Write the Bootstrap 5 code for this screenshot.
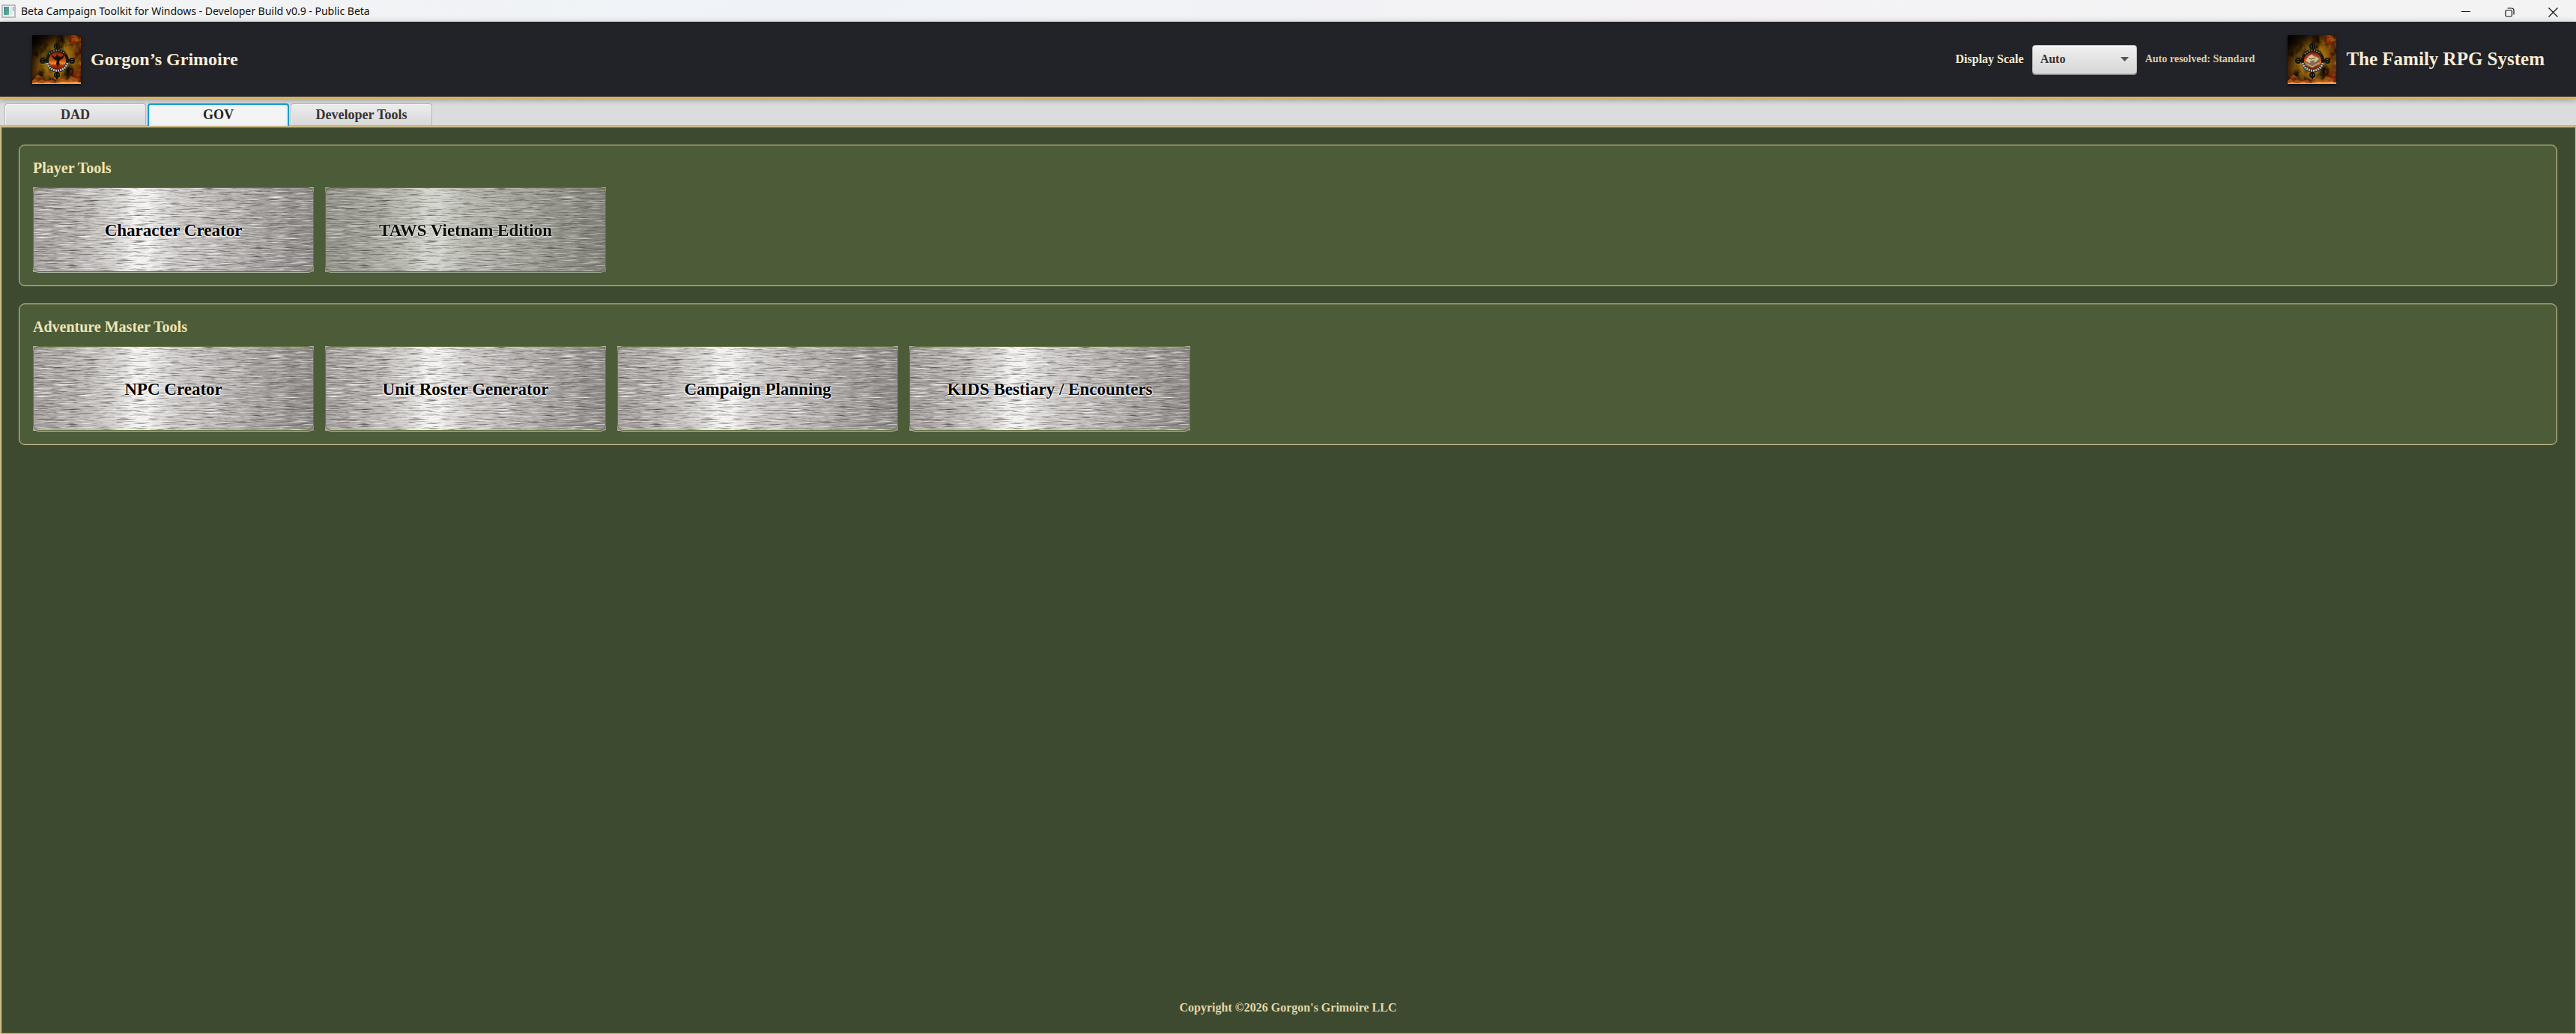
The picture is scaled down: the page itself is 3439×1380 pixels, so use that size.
<!DOCTYPE html>
<html lang="en">
<head>
<meta charset="utf-8">
<meta name="viewport" content="width=device-width, initial-scale=1">
<title>Beta Campaign Toolkit for Windows</title>
<link href="https://cdn.jsdelivr.net/npm/bootstrap@5.3.0/dist/css/bootstrap.min.css" rel="stylesheet">
<style>
  body { font-family: "Liberation Serif", serif; font-weight: 700; background: #3d4a30; line-height: 24px; }
  .window-bar { height: 29px; background: linear-gradient(90deg, #f3f3f3 0, #eff3f8 30%, #f4f2f5 65%, #f3f3f3 100%); color: #111; font: 400 14px/27px "Noto Sans", sans-serif; padding: 0 2px; }
  .window-bar button { width: 58px; height: 28px; }
  .window-icon { margin-right: 6px; }
  .app-head { height: 103px; background: #212328; border-bottom: 3px solid #d2b26b; padding: 0 42px 0 43px; color: #f7ecd6; font-size: 16px; box-shadow: 0 1px 8px rgba(0,0,0,.25); position: relative; }
  .brand { gap: 13px; font-size: 24px; line-height: 28px; }
  .brand-system { font-size: 25px; }
  .brand-art { width: 65px; height: 65px; box-shadow: 0 2px 5px rgba(0,0,0,.5); }
  .scale-box { gap: 11px; margin-right: 44px; }
  .scale-note { font-size: 14px; color: #dccfae; }
  .scale-pick { appearance: none; width: 140px; height: 39px; padding: 0 10px; border: 1px solid #b5b5b5; border-radius: 4px; color: #333; font-size: 16px; font-weight: 700;
    background: url("data:image/svg+xml,%3Csvg xmlns='http://www.w3.org/2000/svg' width='11' height='6'%3E%3Cpath d='M0 0h11L5.500 6z' fill='%23555'/%3E%3C/svg%3E") no-repeat right 10px center, linear-gradient(#f0f0f0, #d6d6d6);
    box-shadow: inset 0 1px #fff, 0 1px #8b8b8b; }
  .tab-strip { height: 36px; padding: 6px 6px 0; gap: 2px; background: linear-gradient(#cfcfcf, #dcdcdc 8px); border: 0; border-bottom: 1px solid #b4b4b4; }
  .tab-strip .nav-link { width: 189px; height: 29px; padding: 0; border: 1px solid #b6b6b6; border-bottom: 0; border-radius: 4px 4px 0 0; margin: 0; color: #333; font-size: 18px; line-height: 28px; background: linear-gradient(#ededed, #d8d8d8); box-shadow: inset 1px 1px #f8f8f8; }
  .tab-strip .nav-link.active { height: 30px; border: 2px solid #159bd0; border-bottom: 0; line-height: 26px; color: #222; background: #f4f4f4; box-shadow: inset 0 0 3px #a5e0f5; }
  .stage { border: 2px solid #c9ba88; border-right-width: 1px; border-bottom-width: 1px; padding: 23px 24px 0 23px; box-shadow: inset 0 0 0 1px #57603c; }
  .tool-group { border: 1px solid #cdbf8f; border-radius: 8px; background: #4d5c38; padding: 18px 18px 17px; box-shadow: inset 0 0 0 1px #626c44; margin-bottom: 23px; }
  .tool-group h2 { font-size: 20px; line-height: 24px; font-weight: 700; color: #f0e4b4; margin: 0 0 14px; }
  .tool-row { gap: 15px; }
  .metal-btn { position: relative; width: 375px; height: 113px; padding: 2px 0 0; border: 0; color: #000; font-size: 23px; font-weight: 700; background: #b7b3b0; margin-bottom: 1px; }
  .metal-btn::after { content: ""; position: absolute; inset: 0; border: 1px solid #66743f; border-radius: 8px; box-shadow: 0 1px #b5bab0; }
  .metal-btn svg { position: absolute; inset: 0; width: 100%; height: 100%; }
  .metal-btn span { position: relative; text-shadow: 0 0 2px #fff, 0 1px 2px #fff, 0 1px 3px #fff; }
  .metal-btn.dimmed { opacity: .82; }
  .rights { color: #e5d8a6; font-size: 16px; margin-bottom: 22px; }
</style>
</head>
<body class="d-flex flex-column min-vh-100">

<svg width="0" height="0" class="position-absolute" aria-hidden="true">
  <defs>
    <linearGradient id="steel">
      <stop offset="0" stop-color="#a19c99"/><stop offset=".15" stop-color="#b5b1ae"/><stop offset=".28" stop-color="#cfccc9"/>
      <stop offset=".36" stop-color="#f4f3f1"/><stop offset=".41" stop-color="#f2f0ee"/><stop offset=".5" stop-color="#cfccca"/>
      <stop offset=".68" stop-color="#b9b5b3"/><stop offset=".85" stop-color="#9f9b98"/><stop offset="1" stop-color="#8c8886"/>
    </linearGradient>
    <filter id="darkGrain" x="0" y="0" width="1" height="1" color-interpolation-filters="sRGB">
      <feTurbulence type="fractalNoise" baseFrequency=".045 .75" numOctaves="3" seed="7"/>
      <feColorMatrix values="0 0 0 0 .25  0 0 0 0 .23  0 0 0 0 .22  2 0 0 0 -.980"/>
    </filter>
    <filter id="lightGrain" x="0" y="0" width="1" height="1" color-interpolation-filters="sRGB">
      <feTurbulence type="fractalNoise" baseFrequency=".035 .7" numOctaves="3" seed="21"/>
      <feColorMatrix values="0 0 0 0 1  0 0 0 0 1  0 0 0 0 1  2.200 0 0 0 -1.080"/>
    </filter>
    <symbol id="brushed" viewBox="0 0 375 113" preserveAspectRatio="none">
      <rect width="375" height="113" fill="url(#steel)"/>
      <rect width="375" height="113" filter="url(#darkGrain)"/>
      <rect width="375" height="113" filter="url(#lightGrain)"/>
    </symbol>

    <radialGradient id="glow" cx=".5" cy=".5" r=".66">
      <stop offset="0" stop-color="#c08c12"/><stop offset=".45" stop-color="#96690c"/><stop offset=".75" stop-color="#56300a"/><stop offset="1" stop-color="#2a1206"/>
    </radialGradient>
    <linearGradient id="shade" x2=".6" y2=".6"><stop offset="0" stop-color="#000"/><stop offset=".3" stop-color="#000" stop-opacity=".7"/><stop offset=".7" stop-color="#000" stop-opacity="0"/></linearGradient>
    <linearGradient id="embers" x2="0" y2="1"><stop offset="0" stop-color="#7a1805"/><stop offset=".5" stop-color="#c9500d"/><stop offset=".62" stop-color="#f08f36"/><stop offset=".75" stop-color="#a22e09"/><stop offset="1" stop-color="#5b1006"/></linearGradient>
    <filter id="smoke" x="0" y="0" width="1" height="1" color-interpolation-filters="sRGB">
      <feTurbulence type="fractalNoise" baseFrequency=".09 .07" numOctaves="4" seed="4"/>
      <feColorMatrix values="0 0 0 0 .04  0 0 0 0 .02  0 0 0 0 0  2.400 0 0 0 -1.050"/>
    </filter>
    <filter id="flame" x="0" y="0" width="1" height="1" color-interpolation-filters="sRGB">
      <feTurbulence type="fractalNoise" baseFrequency=".1 .1" numOctaves="4" seed="12"/>
      <feColorMatrix values="0 0 0 0 .8  0 .9 0 0 -.18  0 0 0 0 .03  4 0 0 0 -1.800"/>
      <feComposite in2="SourceGraphic" operator="in"/>
    </filter>
    <filter id="soft"><feGaussianBlur stdDeviation=".4"/></filter>
    <symbol id="crest" viewBox="0 0 65 65">
      <rect width="65" height="65" fill="url(#glow)"/>
      <rect width="65" height="65" filter="url(#smoke)"/>
      <rect width="65" height="65" fill="url(#shade)"/>
      <path d="M42 0h23v65H0v-9l8-3 8 4 10-3 12 2 10-6 7-12-2-16-9-12z" fill="#f70" filter="url(#flame)" opacity=".7"/>
      <path d="M0 65v-4l4-3 4 3 5-2 6 3 7-3 6 3 8-4 6 2 6-5 9 3v7z" fill="#d9641a" opacity=".6" filter="url(#soft)"/>
      <path d="M0 65v-1l6-1 7 1 9-1 9 1 10-2 9 1 8-1 7 1v2z" fill="#f2a648" filter="url(#soft)"/>
      <g filter="url(#soft)">
        <path d="M33 10v49M10 34h46" stroke="#0f0d06" stroke-width="2"/>
        <g fill="none" stroke="#15120a" stroke-width="2"><circle cx="33" cy="15" r="3"/><circle cx="33" cy="53" r="3"/><circle cx="14" cy="34" r="3"/><circle cx="53" cy="34" r="3"/></g>
        <circle cx="33.500" cy="34" r="13.500" fill="url(#embers)" stroke="#15140f" stroke-width="4"/>
        <path d="M23 25a14 14 0 0 1 21 0" fill="none" stroke="#8a8468" stroke-width="2" stroke-dasharray="1.500 1.800"/>
        <path d="M20 37a14 14 0 0 0 27 0" fill="none" stroke="#b5b9b9" stroke-width="3" stroke-dasharray="2.200 .9"/>
      </g>
    </symbol>
  </defs>
</svg>

<div class="window-bar d-flex align-items-center">
  <svg width="20" height="18" viewBox="0 0 20 18" class="window-icon" aria-hidden="true">
    <defs><linearGradient id="pane" x2="1" y2="1"><stop stop-color="#4b7fae"/><stop offset="1" stop-color="#5fba7f"/></linearGradient></defs>
    <rect x="1" y="1" width="17" height="16" fill="#f7f9fa" stroke="#a3abb3" stroke-width="1.500"/>
    <rect x="3" y="3" width="7" height="11" fill="url(#pane)"/><rect x="11" y="3" width="4" height="11" fill="#e2e8ec"/><path d="M16 3v6" stroke="#4f9d93"/>
  </svg>
  <span class="me-auto">Beta Campaign Toolkit for Windows - Developer Build v0.9 - Public Beta</span>
  <button class="btn p-0 border-0 lh-1" type="button" aria-label="Minimize"><svg width="12" height="12"><path d="M0 5.500h12" stroke="#111"/></svg></button>
  <button class="btn p-0 border-0 lh-1" type="button" aria-label="Restore"><svg width="13" height="13" fill="none" stroke="#111" stroke-width="1.200"><rect x="1" y="3.500" width="8.500" height="8.500" rx="1.500"/><path d="M3.500 1H9a3 3 0 0 1 3 3v5.500"/></svg></button>
  <button class="btn p-0 border-0 lh-1" type="button" aria-label="Close"><svg width="13" height="13"><path d="M.5.5l12 12M12.500.5l-12 12" stroke="#111" stroke-width="1.200"/></svg></button>
</div>

<header class="app-head d-flex align-items-center">
  <div class="brand d-flex align-items-center me-auto">
    <svg class="brand-art" viewBox="0 0 65 65" role="img" aria-label="Winged crest">
      <use href="#crest"/>
      <path d="M25 26l5 3 2-1 1-3 2 3 3 1 5-3-2 5-4 2-1 3 1 4-2-1-1 4-2-5 1-4-4-2z" fill="#170905" filter="url(#soft)"/>
    </svg>
    <span>Gorgon’s Grimoire</span>
  </div>
  <div class="scale-box d-flex align-items-center">
    <label for="scale">Display Scale</label>
    <select id="scale" class="scale-pick"><option>Auto</option></select>
    <span class="scale-note">Auto resolved: Standard</span>
  </div>
  <div class="brand brand-system d-flex align-items-center">
    <svg class="brand-art" viewBox="0 0 65 65" role="img" aria-label="Book crest">
      <use href="#crest"/>
      <g filter="url(#soft)"><path d="M23 35l5-7 4-3 5 2 7 4-2 8-9 5-9-4z" fill="#8c6b49"/><path d="M24 34l4-6 4-2 3 2 7 3-5 5-4-1-4 2z" fill="#d3c09a"/><path d="M25 38l8 4 9-5" fill="none" stroke="#d8bf92"/><path d="M28 31l4 1 5-2M30 35l6-1" stroke="#5d432c" fill="none"/></g>
    </svg>
    <span>The Family RPG System</span>
  </div>
</header>

<nav class="tab-strip nav nav-tabs flex-nowrap">
  <a class="nav-link text-center" href="#">DAD</a>
  <a class="nav-link text-center active" aria-current="page" href="#">GOV</a>
  <a class="nav-link text-center" href="#">Developer Tools</a>
</nav>

<main class="stage flex-grow-1 d-flex flex-column">
  <section class="tool-group">
    <h2>Player Tools</h2>
    <div class="tool-row d-flex flex-wrap">
      <button type="button" class="metal-btn"><svg aria-hidden="true"><use href="#brushed"/></svg><span>Character Creator</span></button>
      <button type="button" class="metal-btn dimmed"><svg aria-hidden="true"><use href="#brushed"/></svg><span>TAWS Vietnam Edition</span></button>
    </div>
  </section>
  <section class="tool-group">
    <h2>Adventure Master Tools</h2>
    <div class="tool-row d-flex flex-wrap">
      <button type="button" class="metal-btn"><svg aria-hidden="true"><use href="#brushed"/></svg><span>NPC Creator</span></button>
      <button type="button" class="metal-btn"><svg aria-hidden="true"><use href="#brushed"/></svg><span>Unit Roster Generator</span></button>
      <button type="button" class="metal-btn"><svg aria-hidden="true"><use href="#brushed"/></svg><span>Campaign Planning</span></button>
      <button type="button" class="metal-btn"><svg aria-hidden="true"><use href="#brushed"/></svg><span>KIDS Bestiary / Encounters</span></button>
    </div>
  </section>
  <footer class="rights mt-auto text-center">Copyright ©2026 Gorgon's Grimoire LLC</footer>
</main>

<script src="https://cdn.jsdelivr.net/npm/bootstrap@5.3.0/dist/js/bootstrap.bundle.min.js"></script>
</body>
</html>
